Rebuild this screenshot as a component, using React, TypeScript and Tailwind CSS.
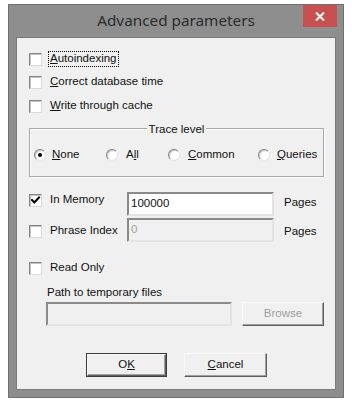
import React from "react";

function CheckBox({ checked }: { checked?: boolean }) {
  return (
    <div className="w-[13px] h-[13px] shrink-0 bg-white border border-t-[#858585] border-l-[#858585] border-r-[#dadada] border-b-[#dadada] shadow-[inset_1px_1px_0_#c4c4c4] flex items-center justify-center">
      {checked && (
        <svg width="11" height="11" viewBox="0 0 11 11">
          <path d="M2 5 L4.3 7.5 L9 2.5" fill="none" stroke="#000" strokeWidth="2" strokeLinecap="square" />
        </svg>
      )}
    </div>
  );
}

function Radio({ checked }: { checked?: boolean }) {
  return (
    <div className="w-[12px] h-[12px] shrink-0 rounded-full bg-white border border-t-[#858585] border-l-[#858585] border-r-[#e6e6e6] border-b-[#e6e6e6] shadow-[inset_1px_1px_0_#c8c8c8] flex items-center justify-center">
      {checked && <div className="w-[4px] h-[4px] rounded-full bg-black" />}
    </div>
  );
}

function Sunken({ className, children }: { className: string; children?: React.ReactNode }) {
  return (
    <div
      className={
        "border-2 border-t-[#8a8a8a] border-l-[#8a8a8a] border-r-[#e4e4e4] border-b-[#e4e4e4] flex items-center pl-[2px] " +
        className
      }
    >
      {children}
    </div>
  );
}

function Btn({ className, children }: { className: string; children?: React.ReactNode }) {
  return (
    <div
      className={
        "border border-t-[#f8f8f8] border-l-[#f8f8f8] border-r-[#5e5e5e] border-b-[#5e5e5e] shadow-[inset_-1px_-1px_0_#a0a0a0] flex items-center justify-center " +
        className
      }
    >
      {children}
    </div>
  );
}

export default function App() {
  return (
    <div className="w-[352px] h-[403px] bg-white pt-[4px] pl-[8px] font-['Liberation_Sans',Arial,sans-serif] text-[11.5px] text-[#111] leading-none">
      <div className="w-[336px] h-[394px] bg-[#8e8e8e] border border-[#707070] flex flex-col px-[7px] pb-[7px]">
        {/* Title bar */}
        <div className="h-[32px] shrink-0 relative flex items-center justify-center">
          <span className="font-['Noto_Sans',sans-serif] text-[15.3px] text-[#2b2b2b] pb-[1px]">
            Advanced parameters
          </span>
          <div className="absolute right-[-1px] top-0 w-[34px] h-[22px] bg-[#c75050] flex items-center justify-center">
            <svg width="10" height="9" viewBox="0 0 10 9">
              <path d="M1 0.5 L9 8.5 M9 0.5 L1 8.5" stroke="#fff" strokeWidth="2" />
            </svg>
          </div>
        </div>

        {/* Client area */}
        <div className="flex-1 bg-[#f0f0f0] border border-[#7a7a7a] flex flex-col">
          {/* top checkboxes */}
          <div className="pl-[12px] pt-[13px] flex flex-col">
            <div className="h-[16px] flex items-center">
              <CheckBox />
              <span className="ml-[6px] border border-dotted border-black px-[1px] py-[1px]">
                <u className="underline-offset-[1px]">A</u>utoindexing
              </span>
            </div>
            <div className="h-[16px] mt-[7px] flex items-center">
              <CheckBox />
              <span className="ml-[8px]">
                <u className="underline-offset-[1px]">C</u>orrect database time
              </span>
            </div>
            <div className="h-[16px] mt-[8px] flex items-center">
              <CheckBox />
              <span className="ml-[8px]">
                <u className="underline-offset-[1px]">W</u>rite through cache
              </span>
            </div>
          </div>

          {/* group box */}
          <div className="ml-[12px] mt-[14px] w-[295px] h-[49px] relative border border-[#a8a8a8] shadow-[inset_1px_1px_0_#ffffff,1px_1px_0_#ffffff] pt-[18px] pl-[4px]">
            <div className="absolute left-0 right-0 top-[-6px] flex justify-center">
              <span className="bg-[#f0f0f0] px-[2px] h-[14px] flex items-center">Trace level</span>
            </div>
            <div className="h-[16px] flex items-center">
              <div className="w-[72px] flex items-center">
                <Radio checked />
                <span className="ml-[6px]">
                  <u className="underline-offset-[1px]">N</u>one
                </span>
              </div>
              <div className="w-[62px] flex items-center">
                <Radio />
                <span className="ml-[8px]">
                  A<u className="underline-offset-[1px]">l</u>l
                </span>
              </div>
              <div className="w-[90px] flex items-center">
                <Radio />
                <span className="ml-[8px]">
                  <u className="underline-offset-[1px]">C</u>ommon
                </span>
              </div>
              <div className="flex items-center">
                <Radio />
                <span className="ml-[7px]">
                  <u className="underline-offset-[1px]">Q</u>ueries
                </span>
              </div>
            </div>
          </div>

          {/* In memory */}
          <div className="mt-[15px] pl-[12px] h-[24px] flex items-start">
            <div className="w-[98px] h-[16px] flex items-center">
              <CheckBox checked />
              <span className="ml-[8px]">In Memory</span>
            </div>
            <Sunken className="w-[147px] h-[24px] bg-white">100000</Sunken>
            <span className="ml-[10px] mt-[3px] h-[16px] flex items-center">Pages</span>
          </div>

          {/* Phrase index */}
          <div className="mt-[2px] pl-[12px] h-[24px] flex items-start">
            <div className="w-[98px] h-[16px] mt-[5px] flex items-center">
              <CheckBox />
              <span className="ml-[8px]">Phrase Index</span>
            </div>
            <Sunken className="w-[147px] h-[24px] bg-[#f0f0f0] text-[#a0a0a0]">0</Sunken>
            <span className="ml-[10px] mt-[6px] h-[16px] flex items-center">Pages</span>
          </div>

          {/* Read only */}
          <div className="mt-[18px] pl-[12px] h-[16px] flex items-center">
            <CheckBox />
            <span className="ml-[8px]">Read Only</span>
          </div>

          <div className="mt-[9px] pl-[30px] h-[16px] flex items-center">Path to temporary files</div>

          <div className="mt-[1px] pl-[29px] h-[24px] flex items-center">
            <Sunken className="w-[186px] h-[24px] bg-[#f0f0f0]" />
            <Btn className="ml-[10px] w-[82px] h-[24px] text-[#a0a0a0]">Browse</Btn>
          </div>

          {/* OK / Cancel */}
          <div className="mt-[27px] pl-[69px] flex items-center">
            <div className="w-[81px] h-[24px] border border-[#3c3c3c] flex">
              <Btn className="flex-1">
                O<u className="underline-offset-[1px]">K</u>
              </Btn>
            </div>
            <Btn className="ml-[17px] w-[83px] h-[24px]">
              <u className="underline-offset-[1px]">C</u>ancel
            </Btn>
          </div>
        </div>
      </div>
    </div>
  );
}
